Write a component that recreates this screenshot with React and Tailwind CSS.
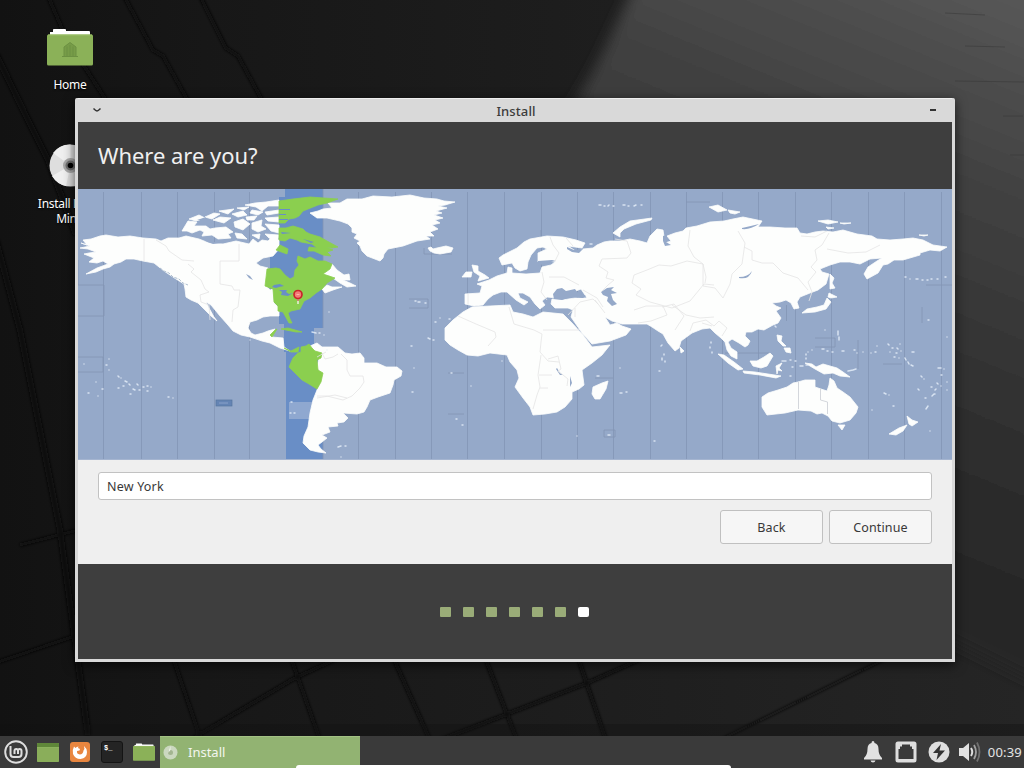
import React from "react";

const LAND = [
  // North America
  "81,243 87,245 83,240 91,239 100,236 106,235 118,237 130,236 143,238 156,239 161,241 168,238 179,238 186,236 199,239 209,243 223,244 236,241 249,244 253,239 258,243 262,240 268,241 272,237 279,240 279,249 273,256 263,258 256,263 260,266 268,268 267,277 266,286 270,290 273,289 274,303 279,308 279,316 270,316 263,317 257,320 250,322 248,328 251,333 255,335 263,333 268,331 275,329 272,337 283,338 284,347 290,351 280,348 270,343 262,341 250,337 241,335 233,331 228,325 220,316 211,305 206,302 209,308 214,317 217,321 211,316 204,309 198,303 191,300 186,297 185,289 184,284 176,279 164,271 154,263 143,261 134,259 126,259 121,262 114,264 110,267 103,269 96,272 86,274 97,268 108,264 103,261 97,263 89,262 94,258 84,254 89,253 96,252 88,249 80,248 90,246",
  // Labrador, Newfoundland, Nova Scotia
  "332,264 337,270 344,275 349,274 350,280 343,280 350,283 356,286 347,287 340,283 330,276 323,274",
  "322,289 327,285 332,287 342,287 333,290 325,293",
  // Greenland
  "310,213 318,211 323,209 332,208 328,203 340,203 347,199 362,199 373,196 392,197 410,195 424,198 437,199 444,201 455,202 445,205 438,206 447,208 436,211 442,213 434,215 443,218 435,220 440,223 432,225 438,229 430,232 434,236 426,236 430,239 417,241 403,246 388,249 384,254 383,258 380,261 367,256 362,251 360,246 357,243 360,241 354,238 357,234 352,232 352,228 348,224 340,221 327,218 317,218",
  "428,248 431,247 433,249 437,248 446,246 453,248 451,252 440,254 434,253 430,251",
  // South America
  "310,346 317,343 322,347 338,347 345,353 352,354 360,353 364,358 364,363 377,363 386,367 397,367 402,371 401,376 394,380 393,385 390,393 378,397 370,400 367,407 364,412 357,414 343,413 348,418 344,422 337,423 338,426 328,427 330,432 322,435 327,438 322,442 318,445 321,449 326,453 318,452 310,450 303,443 304,436 308,427 310,413 313,400 317,390 322,377 317,367 320,353 313,351",
  // Eurasia
  "465,294 480,293 482,286 477,284 489,280 497,276 507,273 508,267 512,268 512,273 526,274 540,273 542,267 551,265 555,262 548,261 538,262 538,253 547,249 543,247 537,248 531,255 528,262 527,269 520,271 515,268 512,263 502,265 499,258 503,255 517,248 524,242 530,239 547,236 563,237 576,240 585,243 582,248 568,246 577,252 583,249 593,248 597,245 604,242 610,241 620,241 630,239 640,241 647,243 650,236 657,229 663,230 665,243 671,241 667,236 675,233 683,231 686,228 697,226 710,222 724,221 733,219 743,217 762,221 758,227 770,227 785,228 797,228 800,233 807,234 815,232 823,231 833,232 843,230 857,234 872,236 877,239 890,240 903,239 913,238 923,240 933,245 947,247 940,251 930,250 920,253 920,255 903,260 894,260 888,264 883,265 878,273 867,279 864,274 868,267 877,261 882,258 870,259 860,264 850,262 840,262 830,265 820,269 822,272 829,274 826,284 818,290 810,293 800,297 797,302 799,308 794,309 791,303 786,300 780,302 772,303 776,306 781,308 776,311 781,318 778,323 773,325 764,330 758,329 752,332 746,332 745,336 750,341 748,345 745,347 739,343 732,339 728,342 731,348 737,352 737,359 731,356 727,350 725,342 721,338 715,333 710,328 702,329 692,333 681,341 679,348 675,351 668,343 663,334 658,331 652,327 647,324 635,324 622,324 612,321 605,317 610,325 617,323 622,326 631,329 626,335 610,341 592,344 582,333 571,317 573,310 568,308 555,308 551,304 552,299 562,300 575,298 587,298 581,289 568,294 557,298 547,297 542,301 545,305 540,309 535,304 530,297 523,293 518,293 520,298 528,302 524,305 516,300 507,292 501,292 493,295 488,299 483,305 474,306 465,304",
  // Africa
  "445,328 453,320 463,312 472,307 490,306 510,305 513,312 523,314 533,317 543,312 563,314 572,323 583,335 592,347 610,345 602,355 592,363 582,370 584,385 579,389 572,392 572,399 565,407 557,412 545,414 533,415 530,407 523,398 515,387 519,378 517,370 510,362 507,355 490,353 478,356 467,355 458,350 450,345 445,340",
  "608,381 606,389 600,399 595,399 592,394 593,387 602,383",
  // Australia
  "762,397 768,393 778,390 787,387 793,383 798,382 805,380 815,380 815,387 827,391 829,385 830,378 834,381 837,388 843,392 850,397 858,407 856,413 850,420 840,423 832,421 828,416 822,413 817,414 811,411 798,410 785,413 767,415 762,407",
  "838,425 845,425 842,430",
  "907,416 912,420 918,422 912,426 909,424",
  "889,434 899,428 907,425 903,431 896,435",
  // British Isles
  "472,265 478,266 478,271 485,275 489,278 478,281 480,276 474,272",
  "462,277 466,272 472,272 471,277",
  // Novaya Zemlya
  "613,233 620,227 630,221 652,218 651,220 636,224 624,229 620,233 620,237",
  // South-east Asian islands
  "718,354 724,355 734,362 743,369 738,370 728,363",
  "743,371 755,372 768,374 781,376 776,378 760,375 744,373",
  "750,361 757,361 764,357 770,353 773,356 767,366 761,368 753,366",
  "805,363 812,364 816,367 823,364 837,368 843,372 850,377 840,376 833,373 824,374 815,369",
  "776,366 782,363 779,368 782,371 778,370 777,374",
  "777,335 782,336 781,341 786,346 783,346 778,341",
  "784,348 790,348 791,353 786,352",
  // Japan, Sakhalin
  "802,313 807,309 817,307 824,305 827,298 831,302 826,309 815,312",
  "828,297 829,293 837,297 831,298",
  "830,274 834,278 832,283 835,288 830,289",
  "680,347 684,351 681,353",
  // Severnaya Zemlya and New Siberian islands
  "709,207 718,205 727,210 718,212", "728,210 740,212 735,214 730,213",
  "818,221 828,220 838,222 828,224", "840,223 851,223 844,224", "826,227 834,228 828,229", "919,235 928,235 924,236",
  // Canadian archipelago
  "182,231 185,226 188,221 197,222 194,226 206,226 210,229 215,228 226,227 233,232 228,234 231,238 218,239 212,235 202,236 204,232 200,230 192,233 187,231",
  "189,219 199,215 205,218 196,221", "205,217 214,213 220,214 212,219", "219,211 234,209 228,214",
  "213,220 220,217 231,218 224,223", "232,214 243,211 247,215 238,217", "237,208 249,207 244,210",
  "245,205 255,203 266,202 279,200 279,206 268,206 262,211 256,207", "252,210 263,212 258,215 250,213",
  "246,217 257,216 254,220 247,220", "234,222 243,219 250,224 243,230 235,227", "252,223 262,220 261,226 266,229 258,232 252,229",
  "265,212 279,210 279,213 267,215", "265,218 279,217 279,222 268,221", "265,224 279,225 279,233 271,231",
  "265,234 279,235 277,242 269,238", "235,233 242,234 247,239 237,238", "252,235 260,234 259,239",
];

const SELECTED_LAND = [
  "279,201 293,199 310,197 338,199 327,203 318,205 313,207 303,211 299,216 295,218 289,219 285,223 279,223",
  "279,228 286,228 293,226 303,229 306,232 310,234 320,237 327,241 338,247 332,248 326,247 333,250 327,252 331,256 323,255 314,251 308,251 309,247 317,248 312,244 301,242 297,240 290,238 285,241 279,240",
  "276,250 280,245 288,249 287,254",
  "298,256 305,259 310,257 318,261 325,261 332,264 330,269 323,274 335,278 327,283 322,289 316,293 310,298 304,301 300,309 291,311 288,313 290,319 292,323 289,323 283,312 278,311 278,306 274,302 273,289 265,286 267,269 276,268 280,269 285,275 290,279 294,277 295,270 299,265 297,261",
  "289,367 293,358 298,353 301,352 301,347 306,346 309,344 312,348 315,351 322,353 321,358 317,360 318,370 323,373 321,382 317,389 309,384 302,380",
  "284,348 291,351 299,347 298,352 291,352", "270,335 275,330 277,329 272,337", "281,329 288,328 302,332 296,332",
];

const BORDERS =
  "M144 239V261M156 240l10 6 3 5 13 9 12 1M239 244v17h-19v23l12 2 2 4h6l-2 17-5 3-1 12M188 264l6 5-3 3 10 8 4 9 4 3-9 3 1 7 8 3 1 15" +
  "M341 354l6 6 0 10 3 6 13 0 1 6-4 6-8 8-9 4-16-4-10 0M322 353l3 6 8-2 5-3M317 357l9-5M347 398l-12-3-18 3" +
  "M458 316l18 8 19 8 1 5-8 9M509 307l5 17 20 6 8 4-1 8-1 10 8 9 11 1M543 330h36M541 355l-3 20 2 12-3 8-4 14M539 375h13M540 388h8M548 359l10-3 3 13-3 2M558 371l10 8-1 7" +
  "M550 237l3 8 6 8-4 8M542 272l2 10-3 10 6 8M549 277l15 0 15 8M615 239l12 2 4 12-4 5-25 1-3 7 9 6-2 6 8 2-6 5-7 7" +
  "M568 315l12-13 13-3 5 5M583 290l14 8 6 9M632 283l2-8 13-5 12-5 12 1 16-5 16 3 3 13-1 6M632 283l9 6-5 6 14 7 22 6 18-7 14-17 10 1M690 230l-2 16 6 11 9 7 0 22 12 2 8 10 7-14 2-10 10-10 3-21-7-12" +
  "M744 247l8 4 0 9 10 3 11 0 10 10 15 5 10 12M801 236l14 1 12-6M829 233l-7 12-7 5 2 10-6 7 5 5-8 10 4 10-3 9M827 249l21 4 18-1 14-7" +
  "M690 331l3-8 13-3 8 6 5-5 8 7-5 8M634 310l12-4 17 0 4 9-16 6-13 2M662 307l12-3 10 12-9 14M672 305l14 10 14 3 14-1M595 300l10 13M702 323l10 3" +
  "M566 238l7 8M468 294v10M575 308v9";

const ZONES = [103, 141, 177, 214, 249, 358, 395, 431, 467, 504, 541, 577, 613, 650, 686, 722, 758, 795, 831, 868, 904, 941];

const ISLES =
  "M84 364h0M106 365h1M109 370h0M118 376l1 1M121 378h0M125 381l2 1M129 384l1 1M133 389l2 1M139 390h1M96 382h0M102 389h1M147 386h1M151 387h0M168 397h1M173 398h0M118 388h1M123 386h1M137 384l1 1M143 387h1M147 391h1M88 393h1M98 396h0M109 359h0M130 394h1" +
  "M411 346h1M428 338l2 1M433 340h1M415 301h1M418 302h2M425 303h1M435 322h1M440 318h0M449 319h1M412 392h1M414 368h0M456 419h1M462 425h1M471 386h0M502 361h0M451 373h1" +
  "M312 332l4 1M319 333h1M324 335h0M327 350h0M341 457h0M338 447l3-1M345 446h1M329 312h0M597 376h2M620 368h0M620 393l2 0M626 392h1M577 436h0M608 435h2M661 346l1-1M664 354v1M662 358v2M665 361v1M659 371h1M654 441h1M711 342v1M710 347v1M712 352v1" +
  "M599 205l2 0M604 206h1M608 206l1-1M613 206h1M623 205h2M628 206h1M634 206l2-1M641 205h1M590 244h2M905 277l1 0M910 279h0M916 279h2M922 280h1M927 280h1M931 279h1M937 279h1M945 277h1M905 358l1 2M908 362l1 2M911 365l2 1" +
  "M825 330h0M838 331l0 4M839 337v3M822 349l2 0M827 351h1M832 352h1M842 351h2M854 350h1M857 353h0M863 352h0M871 353h0M875 352h1M877 346h0M888 344l1 1M892 348h1M890 352h0M897 348l1 1M900 344v0M896 353h1M901 351h0M894 357h1M899 358h0M912 352l2 0" +
  "M808 352h0M812 350h0M806 354v1M806 358v1M782 361h4M790 360h1M795 361h1M792 367h1M800 366h3M806 365h2M790 376h1M884 393l2 1M889 395h0M893 406h1M872 410h0M928 320h1M947 337h0M938 368h3M944 369h0M941 375h1M921 376l1 1M924 379h0M918 389l1 1M931 387h1M935 390l1-1M934 394h1M937 383l1 1M941 386h0M925 398h1M932 396l2-2M947 382h0M947 390h0M926 409l2-3M930 431h0M848 371l5-1M853 370l3-1M775 326l1 1M291 402h1M290 413h1M294 413h1M250 340h0";

function WorldMap() {
  return (
    <svg className="block h-[271px] w-[874px] shrink-0" viewBox="78 189 874 271" aria-label="World time zone map">
      <rect x="78" y="189" width="874" height="271" fill="#95a9c9" />
      <path d="M285 189H323V328H314V354H323V460H286V352H284V324H279V316H270V240H279V197H285Z" fill="#698ec6" />
      <rect x="289" y="402" width="25" height="17" fill="#8fa8d0" />
      <rect x="216" y="400" width="16" height="6" fill="#6484b4" stroke="#56759f" strokeWidth=".7" />
      <path d="M219 403h9" stroke="#89a1c9" />
      {ZONES.map((x) => (
        <path key={x} d={`M${x + 0.5} 192V459`} stroke="#8699b9" strokeWidth="1" />
      ))}
      <path
        d="M78 285H104V316H78M78 357H103V372M78 372H103M424 248V254H452M409 299H428V308H409M686 202H710M926 285H952M922 307V323M815 338H835V347H815M858 340V369M883 364H902M786.500 305V321M541 230V240M78 260V285M595 378H613M448 414H464M448 373H464M725 353H770M323 189V328M323 354V460M604 430H615V437H604Z"
        fill="none" stroke="#8395b4" strokeWidth=".8"
      />
      <g fill="#fdfefd" stroke="#fdfefd" strokeWidth=".8" strokeLinejoin="round">
        {LAND.map((p) => <polygon key={p} points={p} />)}
      </g>
      <g fill="#8bcf4f" stroke="#8bcf4f" strokeWidth=".8" strokeLinejoin="round">
        {SELECTED_LAND.map((p) => <polygon key={p} points={p} />)}
      </g>
      <path d={ISLES} fill="none" stroke="#e8f1fb" strokeWidth="1.500" strokeLinecap="round" opacity=".8" />
      <g fill="#95a9c9">
        <path d="M553 294l4-5 5-1 4 3 9-2 2 3 9 4-3 2-12-1-9 3-8-1Z" />
        <path d="M601 292l6-4 7-1-3 3 6 3-6 1 2 6 4 4-5 2-5-5 1-4-5-2Z" />
        <path d="M663 236l4-1-1 7 5 3-6 1-2-5Z" />
        <path d="M567 247l7 3 9-1-4 4-7-1-5-3Z" />
        <path d="M538 261l14-1 4 1-10 2-8 3Z" />
        <path d="M246 274l4 2 3 4-4-2Z" />
        <path d="M739 277q9 0 13-6-3 9-13 7ZM742 228q9-2 17-4-9 6-17 5Z" />
        <path d="M557 368l3 5 3 2-3 0-4-6ZM570 376l2 7-2 4ZM197 220l9-3-2 3ZM205 241l9 1 8 1-9 1Z" />
      </g>
      <path d="M160 268l4 3 5 2 4 4 6 2 4 4 5 2" fill="none" stroke="#a7b8cb" strokeWidth=".9" strokeDasharray="3 1.400" />
      <g fill="#698ec6">
        <path d="M274 285l6-1 4 2-5 1-3 1-4-1ZM279 290l8 0-1 2 3 2 4-1-5 3-7-1 1-3Z" />
        <path d="M279 209h11v1h-11ZM279 214h7v1h-7ZM279 219h9v1h-9ZM281 232l10 1-9 1ZM303 239l11 3-3 1Z" />
      </g>
      <path d={BORDERS} fill="none" stroke="#e4e4e4" strokeWidth=".8" />
      <path d="M798.500 382v27M820.500 388v12l7 2v12" fill="none" stroke="#cfd3d8" strokeWidth=".9" />
      <g stroke="#c8252c">
        <path d="M298 299v5" stroke="#eef0df" strokeWidth="1.500" />
        <path d="M298 298v3" strokeWidth="1" />
        <circle cx="298" cy="294.500" r="4" fill="#f47b78" strokeWidth="1.700" />
        <path d="M296.500 294.500h3" stroke="#ffb1a8" />
      </g>
      <path d="M78 459.500H952" stroke="#a5b5d0" />
    </svg>
  );
}

function Wallpaper() {
  return (
    <svg className="absolute inset-0 h-[768px] w-[1024px]" viewBox="0 0 1024 768" aria-hidden="true">
      <defs>
        <linearGradient id="base" x1="0" y1="0" x2="1" y2="0">
          <stop offset="0" stopColor="#121212" />
          <stop offset=".2" stopColor="#171717" />
          <stop offset=".6" stopColor="#1e1e1e" />
          <stop offset="1" stopColor="#252525" />
        </linearGradient>
        <linearGradient id="slab" gradientUnits="userSpaceOnUse" x1="1030" y1="0" x2="800" y2="560">
          <stop offset="0" stopColor="#575757" />
          <stop offset=".3" stopColor="#424242" />
          <stop offset=".65" stopColor="#303030" />
          <stop offset="1" stopColor="#252525" />
        </linearGradient>
        <filter id="soft"><feGaussianBlur stdDeviation="7" /></filter>
        <filter id="seam"><feGaussianBlur stdDeviation="1.500" /></filter>
      </defs>
      <rect width="1024" height="768" fill="url(#base)" />
      <path d="M637-20L604 50Q588 82 570 110V400L930 630L1050 690V-20Z" fill="url(#slab)" filter="url(#soft)" />
      <g fill="none" stroke="#0a0a0a" strokeWidth="3.500" filter="url(#seam)">
        <path d="M48-4L66 38L106 100M124-4L153 50L163 56L192 108M200-4L226 48L238 56L262 100" />
        <path d="M-4 54L28 120L48 160L76 235M-4 240L20 330L60 530L88 735" strokeWidth="6" />
        <path d="M20 545L78 530M-2 662L75 636" strokeWidth="3" />
        <path d="M172 655L201 740M290 655L320 740M392 655L430 740M484 655L517 740M577 655L606 740" />
        <path d="M190 740L295 678L345 655M440 740L585 684L650 655" />
        <path d="M720 740L893 655" strokeWidth="2" />
      </g>
      <path d="M945 13l40 2M965 46l40 1M955 81l69 1M1003 116h20M1010 155h14" stroke="#333" opacity=".45" />
      <rect x="-20" y="724" width="1064" height="30" fill="#111" opacity=".4" />
    </svg>
  );
}

function Folder({ className, home, split }) {
  return (
    <svg className={className} viewBox="0 0 46 38" preserveAspectRatio="none" aria-hidden="true">
      {split ? (
        <>
          <rect x="0" y="2" width="46" height="36" rx="1.500" fill="#8aae5a" />
          <path d="M0 3.500Q0 2 1.500 2H44.500Q46 2 46 3.500V10H0Z" fill="#5f8739" />
          <path d="M0 10.500H46" stroke="#9fc46d" />
        </>
      ) : (
        <>
          <path d="M3 4H6V1.500Q6 1 7 1H18Q19 1 19 2V3H42Q43 3 43 4V12H3Z" fill="#fff" />
          <rect x="0" y="6.500" width="46" height="31" rx="1.500" fill="#8bb158" />
          <path d="M1 7H45" stroke="#9bc166" />
        </>
      )}
      {home && <path d="M15 28.500H31M17 28V19L23 14.500L29 19V28M20 28V18.500M23 28V17M26 28V18.500" fill="#779c48" stroke="#6c9042" strokeWidth="1" />}
    </svg>
  );
}

function DesktopIcons() {
  return (
    <div className="absolute left-[20px] top-[28px] flex w-[100px] flex-col items-center text-center text-[12px] leading-[15px] text-white [text-shadow:0_1px_2px_#000]">
      <Folder className="h-[38px] w-[46px]" home />
      <div className="mt-[11px] tracking-[-0.300px]">Home</div>
      <svg className="mt-[52px] h-[43px] w-[43px]" viewBox="0 0 43 43" aria-hidden="true">
        <circle cx="21.500" cy="21.500" r="21" fill="#dedede" />
        <path d="M21.500 21.500L4 9A21 21 0 0 1 21.500 .5ZM21.500 21.500L3 32A21 21 0 0 0 17 42Z" fill="#efefef" />
        <circle cx="21.500" cy="21.500" r="7.500" fill="#a7a7a7" />
        <circle cx="21.500" cy="21.500" r="5" fill="#6e6e6e" />
        <circle cx="21.500" cy="21.500" r="2.800" fill="#000" />
      </svg>
      <div className="mt-[9px] w-[68px] whitespace-nowrap tracking-[-0.300px]">
        <div>Install Linux</div>
        <div className="-ml-[3px]">Mint</div>
      </div>
    </div>
  );
}

function InstallerWindow() {
  return (
    <main className="absolute left-[75px] top-[98px] flex h-[564px] w-[880px] flex-col rounded-t-[2px] border-x-[3px] border-b-[3px] border-[#d9d9d9] bg-[#efefef] shadow-[0_3px_12px_rgba(0,0,0,0.65)]">
      <header className="flex h-6 shrink-0 items-center justify-between border-t border-[#eeeeee] bg-[#d9d9d9] pl-[14px] pr-[16px] text-[#3c3c3c]">
        <svg className="mb-px h-[10px] w-[10px]" viewBox="0 0 10 10" aria-hidden="true">
          <path d="M1.500 3.500Q4 6 5 6Q6 6 8.500 3.500" fill="none" stroke="#333" strokeWidth="1.500" />
        </svg>
        <h1 className="mt-[2px] text-[13px] font-medium tracking-[0.100px]">Install</h1>
        <div className="mb-px h-[2px] w-[6px] bg-[#333333]" />
      </header>
      <section className="flex h-[67px] shrink-0 items-center bg-[#3e3e3e] pb-[2px] pl-5">
        <h2 className="text-[22px] leading-[30px] tracking-[-0.030px] text-[#f0f0f0]">Where are you?</h2>
      </section>
      <WorldMap />
      <section className="flex h-[104px] shrink-0 flex-col gap-[10px] px-5 pt-3 text-[#383838]">
        <div className="flex h-7 items-center rounded-[3px] border border-[#c2c2c2] bg-white px-2 pt-[2px] text-[12.500px] tracking-[0.200px]">New York</div>
        <div className="flex justify-end gap-[6px]">
          <button className="h-[34px] w-[103px] rounded-[3px] border border-[#c0c0c0] bg-[#f6f6f6] pt-[2px] text-[12.500px] tracking-[0.150px]">Back</button>
          <button className="h-[34px] w-[103px] rounded-[3px] border border-[#c0c0c0] bg-[#f6f6f6] pt-[2px] text-[12.500px] tracking-[0.150px]">Continue</button>
        </div>
      </section>
      <footer className="flex flex-1 items-center justify-center gap-3 bg-[#3e3e3e] pr-[1px]">
        {[0, 1, 2, 3, 4, 5].map((n) => <span key={n} className="h-[10px] w-[11px] rounded-[1px] bg-[#9aac78]" />)}
        <span className="h-[10px] w-[11px] rounded-[2px] bg-white" />
      </footer>
    </main>
  );
}

function Taskbar() {
  return (
    <nav className="absolute inset-x-0 bottom-0 flex h-8 items-center justify-between bg-[#3a3a3a] text-[13px] text-[#e4e4e4]">
      <div className="flex h-8 items-center">
        <svg className="ml-1 h-6 w-6" viewBox="0 0 24 24" fill="none" stroke="#dedede" aria-label="Menu">
          <circle cx="12" cy="12" r="10.800" strokeWidth="1.900" />
          <path d="M6.500 6V14Q6.500 17 9.500 17H14.500Q17.500 17 17.500 14V11Q17.500 9 15.700 9Q14 9 14 11V14M14 11Q14 9 12.200 9Q10.500 9 10.500 11V14" strokeWidth="2" />
        </svg>
        <Folder className="ml-[9px] h-5 w-[22px]" split />
        <svg className="ml-[11px] h-5 w-5" viewBox="0 0 20 20" aria-label="Firefox">
          <rect width="20" height="20" rx="3" fill="#e9863f" />
          <path d="M4 4.500Q2 8 3 12Q5 17 10.500 17Q17 16 17 10Q17 6.500 14 4Q15 7 13.500 8.500Q13 12.500 9.800 12.500Q6.500 12 7 9L9.500 8.500L10 7L8 6L8.500 4.500Q6.500 4.500 5.500 6Z" fill="#fff" />
        </svg>
        <div className="ml-[11px] flex h-[22px] w-[22px] items-start rounded-[3px] border border-[#141414] bg-[#242424] pl-[2px] pt-[2px] font-['Liberation_Mono'] text-[7px] font-bold leading-[8px] text-white">$_</div>
        <Folder className="ml-[10px] h-[18px] w-[22px]" />
        <div className="ml-[5px] flex h-8 w-[200px] items-center border-t border-[#a3c184] bg-[#92b372] pl-[3px] text-[#f3f6ef]">
          <svg className="h-[15px] w-[15px]" viewBox="0 0 15 15" aria-hidden="true">
            <circle cx="7.500" cy="7.500" r="7" fill="#cbd8bf" />
            <circle cx="7.500" cy="7.500" r="2.500" fill="#a3b590" />
            <path d="M7.500 1V5L5 8Z" fill="#edf2e8" />
          </svg>
          <span className="ml-[10px] mt-px text-[13px]">Install</span>
        </div>
      </div>
      <div className="flex h-8 items-center pr-[2px]">
        <svg className="h-[22px] w-5" viewBox="0 0 20 22" fill="#e2e2e2" aria-label="Notifications">
          <path d="M10 0Q11.500 0 11.500 2Q15.500 3 15.500 8Q15.500 14 19 17V18.500H1V17Q4.500 14 4.500 8Q4.500 3 8.500 2Q8.500 0 10 0ZM7.500 19.500H12.500Q12 21.500 10 21.500Q8 21.500 7.500 19.500Z" />
        </svg>
        <svg className="ml-3 h-[22px] w-[22px]" viewBox="0 0 22 22" aria-label="Network">
          <path fillRule="evenodd" d="M3 .5H19Q21.500 .5 21.500 3V19Q21.500 21.500 19 21.500H3Q.5 21.500 .5 19V3Q.5 .5 3 .5ZM7 3.500V5.500H5V8H3.500V18H18.500V8H17V5.500H15V3.500Z" fill="#dedede" />
        </svg>
        <svg className="ml-[11px] h-[22px] w-[22px]" viewBox="0 0 22 22" aria-label="Power">
          <circle cx="11" cy="11" r="10.500" fill="#dedede" />
          <path d="M13 3L5 12H10L8.500 19L17 9.500H11.500Z" fill="#333" />
        </svg>
        <svg className="ml-2 h-[22px] w-6" viewBox="0 0 24 22" fill="none" aria-label="Volume">
          <path d="M1 7H5L11 2V20L5 15H1Z" fill="#e2e2e2" />
          <path d="M13 7Q15.500 11 13 15" stroke="#dedede" strokeWidth="2" />
          <path d="M16 4Q20 11 16 18" stroke="#a0a0a0" strokeWidth="1.800" />
          <path d="M19 1.500Q24 11 19 20.500" stroke="#707070" strokeWidth="1.800" />
        </svg>
        <span className="ml-[6px] mt-px text-[13px] tracking-[0.200px]">00:39</span>
      </div>
      <div className="absolute left-[296px] top-[29px] h-[3px] w-[435px] rounded-t-[10px] bg-white" />
    </nav>
  );
}

export default function App() {
  return (
    <div className="relative h-[768px] w-[1024px] overflow-hidden bg-[#181818] font-['Noto_Sans','Open_Sans',sans-serif]">
      <Wallpaper />
      <DesktopIcons />
      <InstallerWindow />
      <Taskbar />
    </div>
  );
}
